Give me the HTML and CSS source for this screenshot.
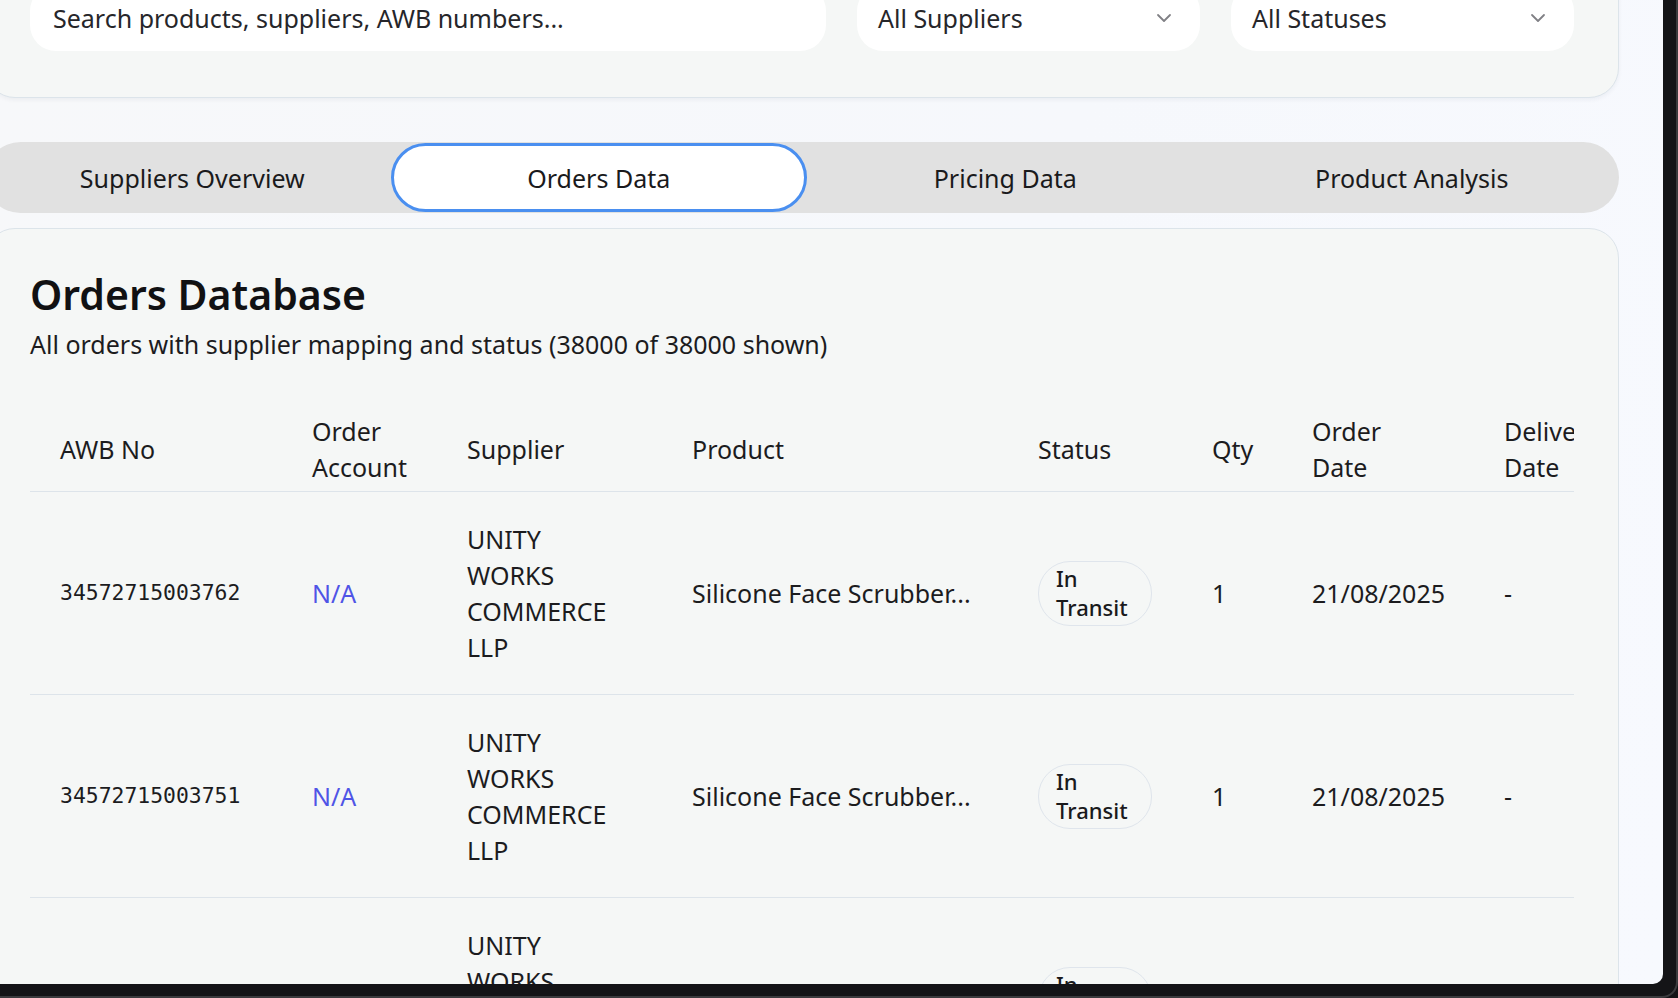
FILE: index.html
```html
<!DOCTYPE html>
<html lang="en">
<head>
<meta charset="utf-8">
<title>Orders Database</title>
<link rel="stylesheet" href="styles.css">
</head>
<body>
<div class="frame">
  <div class="screen">
    <div class="page">
      <section class="card filters">
        <div class="field search"><span class="placeholder">Search products, suppliers, AWB numbers...</span></div>
        <div class="field select"><span>All Suppliers</span>
          <svg class="chev" viewBox="0 0 24 24" width="24" height="24"><path d="m6 9 6 6 6-6"/></svg>
        </div>
        <div class="field select"><span>All Statuses</span>
          <svg class="chev" viewBox="0 0 24 24" width="24" height="24"><path d="m6 9 6 6 6-6"/></svg>
        </div>
      </section>

      <nav class="tabs">
        <div class="tab">Suppliers Overview</div>
        <div class="tab active">Orders Data</div>
        <div class="tab">Pricing Data</div>
        <div class="tab">Product Analysis</div>
      </nav>

      <section class="card orders">
        <h2 class="title">Orders Database</h2>
        <p class="sub">All orders with supplier mapping and status (38000 of 38000 shown)</p>
        <div class="table-wrap">
          <table class="grid">
            <colgroup>
              <col class="c-awb"><col class="c-acc"><col class="c-sup"><col class="c-prod"><col class="c-status"><col class="c-qty"><col class="c-odate"><col class="c-ddate">
            </colgroup>
            <thead>
              <tr>
                <th>AWB No</th>
                <th><span class="stack">Order Account</span></th>
                <th>Supplier</th>
                <th>Product</th>
                <th>Status</th>
                <th>Qty</th>
                <th><span class="stack">Order Date</span></th>
                <th><span class="stack">Delivery Date</span></th>
              </tr>
            </thead>
            <tbody>
              <tr>
                <td class="awb">34572715003762</td>
                <td class="na">N/A</td>
                <td><span class="stack">UNITY WORKS COMMERCE LLP</span></td>
                <td><div class="trunc">Silicone Face Scrubber...</div></td>
                <td><span class="badge">In Transit</span></td>
                <td>1</td>
                <td>21/08/2025</td>
                <td>-</td>
              </tr>
              <tr>
                <td class="awb">34572715003751</td>
                <td class="na">N/A</td>
                <td><span class="stack">UNITY WORKS COMMERCE LLP</span></td>
                <td><div class="trunc">Silicone Face Scrubber...</div></td>
                <td><span class="badge">In Transit</span></td>
                <td>1</td>
                <td>21/08/2025</td>
                <td>-</td>
              </tr>
              <tr>
                <td class="awb">34572715003740</td>
                <td class="na">N/A</td>
                <td><span class="stack">UNITY WORKS COMMERCE LLP</span></td>
                <td><div class="trunc">Silicone Face Scrubber...</div></td>
                <td><span class="badge">In Transit</span></td>
                <td>1</td>
                <td>21/08/2025</td>
                <td>-</td>
              </tr>
            </tbody>
          </table>
        </div>
      </section>
    </div>
  </div>
</div>
</body>
</html>
```

FILE: styles.css
```css
html, body {
  margin: 0;
  padding: 0;
  background: #141417;
}

body {
  font-family: "Noto Sans", "Open Sans", sans-serif;
  font-size: 25px;
  line-height: 36px;
  color: #1c1c1e;
}

.frame {
  width: 1678px;
  height: 998px;
  box-sizing: border-box;
  background: #141417;
  border-right: 2px solid #3b3b3e;
  border-bottom: 2px solid #3b3b3e;
  border-bottom-right-radius: 16px;
  overflow: hidden;
}

.screen {
  width: 1663px;
  height: 984px;
  overflow: hidden;
  border-bottom-right-radius: 10px;
  background: linear-gradient(100deg, #f7f8fa 0%, #f6f8fc 60%, #f7f9fe 100%);
}

.page {
  width: 1634px;
  margin: -60px 0 0 -15px;
}

.card {
  background: #f5f7f6;
  border: 1px solid #dce4ea;
  border-radius: 30px;
  box-sizing: border-box;
}

/* Filters */
.filters {
  padding: 44px 44px 46px;
  display: grid;
  grid-template-columns: 1fr 343px 343px;
  gap: 31px;
  box-shadow: 0 2px 4px rgba(20, 40, 60, 0.05);
}

.field {
  height: 66px;
  background: #ffffff;
  border-radius: 26px;
  display: flex;
  align-items: center;
  box-sizing: border-box;
  color: #26262a;
}

.search {
  padding: 0 23px;
}

.select {
  padding: 0 24px 0 21px;
  justify-content: space-between;
}

.chev {
  fill: none;
  stroke: #808085;
  stroke-width: 1.8;
  stroke-linecap: round;
  stroke-linejoin: round;
}

/* Tabs */
.tabs {
  margin-top: 44px;
  height: 71px;
  background: #e1e1e1;
  border-radius: 36px;
  padding: 0 4px;
  box-sizing: border-box;
  display: grid;
  grid-template-columns: repeat(4, 1fr);
}

.tab {
  display: flex;
  align-items: center;
  justify-content: center;
  font-weight: 400;
  color: #1a1a1c;
}

.tab.active {
  background: #ffffff;
  border: 3px solid #4a8ff0;
  border-radius: 999px;
  margin: 1px -5px;
}

/* Orders card */
.orders {
  margin-top: 15px;
  padding: 41px 44px 44px;
  min-height: 900px;
}

.title {
  margin: 0;
  font-size: 41px;
  line-height: 48px;
  font-weight: 600;
  color: #111113;
}

.sub {
  margin: 8px 0 0;
  line-height: 36px;
  color: #1c1c1e;
}

.table-wrap {
  margin-top: 45px;
  overflow: hidden;
}

.grid {
  border-collapse: collapse;
  table-layout: fixed;
  width: 1644px;
}

.c-awb { width: 252px; }
.c-acc { width: 155px; }
.c-sup { width: 225px; }
.c-prod { width: 346px; }
.c-status { width: 174px; }
.c-qty { width: 100px; }
.c-odate { width: 192px; }
.c-ddate { width: 200px; }

.grid th {
  padding: 6px 30px;
  text-align: left;
  vertical-align: middle;
  font-weight: 400;
  color: #1c1c1e;
  border-bottom: 1px solid #dde4ea;
  white-space: nowrap;
}

.grid td {
  padding: 29px 30px;
  vertical-align: middle;
  border-bottom: 1px solid #dde4ea;
}

.stack {
  display: block;
  width: min-content;
  white-space: normal;
}

.awb {
  font-family: "DejaVu Sans Mono", "Liberation Mono", monospace;
  font-size: 21.4px;
}

.na {
  color: #4f54e6;
}

.trunc {
  overflow: hidden;
  white-space: nowrap;
  text-overflow: ellipsis;
}

.badge {
  display: inline-block;
  box-sizing: border-box;
  padding: 2.5px 17px;
  border: 1px solid #dfe5ec;
  border-radius: 32px;
  font-size: 22px;
  line-height: 29px;
  font-weight: 500;
  color: #1a1a1c;
}
```
